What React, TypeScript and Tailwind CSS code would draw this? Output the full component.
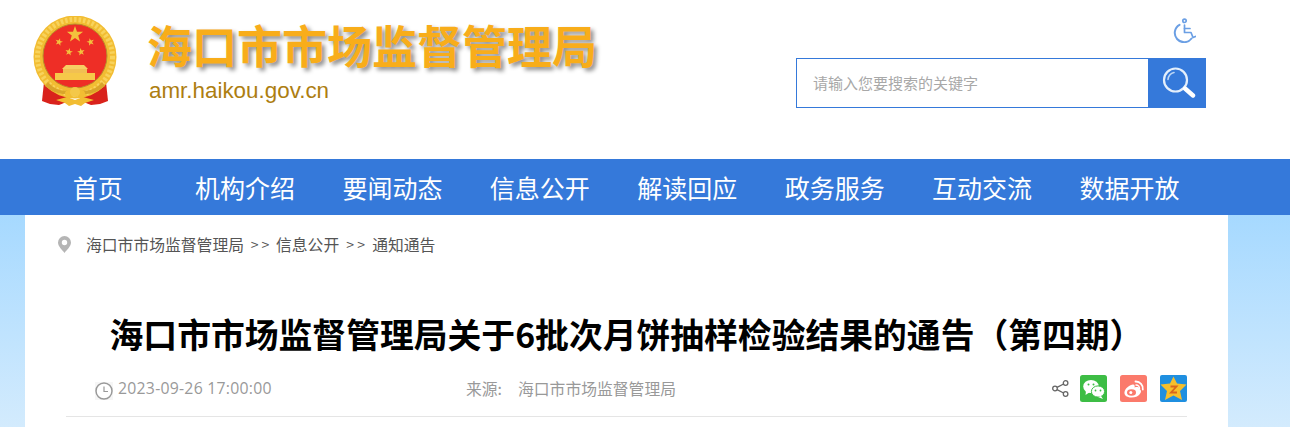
import React from "react";

const CJK = '"Noto Sans CJK SC","Liberation Sans",sans-serif';

function Star({ cx, cy, r, rot = 0 }: { cx: number; cy: number; r: number; rot?: number }) {
  const pts: string[] = [];
  for (let i = 0; i < 10; i++) {
    const a = ((-90 + rot + i * 36) * Math.PI) / 180;
    const rr = i % 2 === 0 ? r : r * 0.4;
    pts.push(`${cx + rr * Math.cos(a)},${cy + rr * Math.sin(a)}`);
  }
  return <polygon points={pts.join(" ")} fill="#f3c23e" />;
}

function Emblem() {
  return (
    <svg width="84" height="92" viewBox="0 0 84 92" className="block">
      <defs>
        <filter id="soft"><feGaussianBlur stdDeviation="0.5" /></filter>
      </defs>
      <g filter="url(#soft)">
        <path d="M11 66 L9 85 L17 88 L26 89 L36 85 L38 76 Z" fill="#d9201a" />
        <path d="M73 66 L75 85 L67 88 L58 89 L48 85 L46 76 Z" fill="#d9201a" />
        <circle cx="42" cy="41" r="41.5" fill="#f2bd33" />
        <circle cx="42" cy="41" r="37.5" fill="none" stroke="#f8d35c" strokeWidth="5" strokeDasharray="2.5 2" />
        <circle cx="42" cy="40" r="32" fill="#ee2f25" stroke="#b98f2a" strokeWidth="1" />
        <Star cx={42} cy={18.5} r={8.5} />
        <Star cx={26} cy={26} r={4} rot={15} />
        <Star cx={57.5} cy={26} r={4} rot={-15} />
        <Star cx={36} cy={36} r={4} rot={10} />
        <Star cx={48} cy={36} r={4} rot={-10} />
        <path d="M33 49 L51 49 L55 53 L29 53 Z" fill="#f7cf63" />
        <rect x="30" y="53" width="24" height="4" fill="#f1c052" />
        <rect x="22" y="57" width="40" height="7" fill="#f6c94a" />
        <path d="M26 64 H58 V67 H26 Z" fill="#ee2f25" />
        <path d="M12 70 Q26 81 36 77 L36 74 Q24 77 15 66 Z" fill="#d9a52a" />
        <path d="M72 70 Q58 81 48 77 L48 74 Q60 77 69 66 Z" fill="#d9a52a" />
        <circle cx="36" cy="78" r="4" fill="#f2bd33" />
        <circle cx="48" cy="78" r="4" fill="#f2bd33" />
        <circle cx="42" cy="76" r="5" fill="#f4c84a" />
        <path d="M23 84 L34 81 L42 84 L50 81 L61 84 L52 87 L48 90 L42 88 L36 90 L32 87 Z" fill="#f2bd33" />
      </g>
    </svg>
  );
}

function AccessIcon() {
  return (
    <svg width="24" height="25" viewBox="0 0 24 25" fill="none" stroke="#6b9fe4" strokeWidth="1.7" strokeLinecap="round" strokeLinejoin="round" className="block">
      <circle cx="12.5" cy="2.8" r="1.7" />
      <path d="M12.5 7 V14.5 H19 L21 19.5 L23.5 18.5" />
      <path d="M12.5 10.5 H18" />
      <path d="M7.5 6.8 A9.3 9.3 0 1 0 19.5 20.5" strokeWidth="2" />
    </svg>
  );
}

function SearchIcon() {
  return (
    <svg width="34" height="32" viewBox="0 0 34 32" fill="none" className="block ml-[3px]">
      <circle cx="13.5" cy="13" r="11.5" stroke="#e4effb" strokeWidth="2.2" />
      <path d="M6 12.5 A8 8 0 0 1 12 5.5" stroke="#bcd6f5" strokeWidth="1.6" strokeLinecap="round" />
      <path d="M23 21.5 L31 28.5" stroke="#ffffff" strokeWidth="4.4" strokeLinecap="round" />
    </svg>
  );
}

function Pin() {
  return (
    <svg width="13" height="17" viewBox="0 0 13 17" className="block">
      <path fillRule="evenodd" d="M6.5 0 A6.5 6.5 0 0 1 13 6.5 C13 10.5 8.5 14 6.5 17 C4.5 14 0 10.5 0 6.5 A6.5 6.5 0 0 1 6.5 0 Z M6.5 3.8 A2.7 2.7 0 1 0 6.5 9.2 A2.7 2.7 0 1 0 6.5 3.8 Z" fill="#b5b5b5" />
    </svg>
  );
}

function Clock() {
  return (
    <svg width="18" height="18" viewBox="0 0 18 18" fill="none" className="block">
      <rect width="18" height="18" fill="#f6f6f6" />
      <circle cx="9" cy="9" r="8" fill="#ffffff" stroke="#999999" strokeWidth="1.5" />
      <path d="M9 4.5 V9.5 H13" stroke="#999999" strokeWidth="1.2" />
    </svg>
  );
}

function Share() {
  return (
    <svg width="17" height="17" viewBox="0 0 17 17" fill="none" stroke="#666666" strokeWidth="1.3" className="block">
      <circle cx="13.6" cy="3" r="2.3" />
      <circle cx="3" cy="8.5" r="2.3" />
      <circle cx="13.6" cy="14" r="2.3" />
      <path d="M5 7.4 L11.6 4 M5 9.6 L11.6 13" />
    </svg>
  );
}

function Wechat() {
  return (
    <svg width="27" height="27" viewBox="0 0 27 27" className="block">
      <rect width="27" height="27" rx="2.5" fill="#3dbd45" />
      <ellipse cx="11" cy="11.5" rx="7.8" ry="6.6" fill="#ffffff" />
      <path d="M6 16 L5.5 20 L10 17 Z" fill="#ffffff" />
      <ellipse cx="18" cy="16.5" rx="6.6" ry="5.6" fill="#ffffff" stroke="#3dbd45" strokeWidth="1" />
      <path d="M21 21 L23 24 L18 22 Z" fill="#ffffff" />
      <circle cx="8.5" cy="9.5" r="1" fill="#3dbd45" />
      <circle cx="13.5" cy="9.5" r="1" fill="#3dbd45" />
      <circle cx="15.5" cy="15.5" r="0.9" fill="#3dbd45" />
      <circle cx="20.5" cy="15.5" r="0.9" fill="#3dbd45" />
    </svg>
  );
}

function Weibo() {
  return (
    <svg width="27" height="27" viewBox="0 0 27 27" className="block">
      <rect width="27" height="27" rx="2.5" fill="#fb7a6b" />
      <path d="M11.5 22.5 C6.5 22.5 4 20 4.5 17 C5 13.5 10 9.5 13 9.5 C15 9.5 15 11.5 14.5 12.5 C17 11.7 19.5 12 19.5 14 C21 15 21.5 16 20.5 18 C19 21 15.5 22.5 11.5 22.5 Z" fill="#ffffff" />
      <ellipse cx="11.5" cy="17.5" rx="4.5" ry="3.2" fill="#fb7a6b" />
      <circle cx="10.8" cy="17.5" r="1.5" fill="#ffffff" />
      <path d="M15.5 6.5 A7 7 0 0 1 22.8 14.5" stroke="#ffffff" strokeWidth="1.8" fill="none" strokeLinecap="round" />
      <path d="M16 10 A3.5 3.5 0 0 1 19.5 13.5" stroke="#ffffff" strokeWidth="1.5" fill="none" strokeLinecap="round" />
    </svg>
  );
}

function Qzone() {
  return (
    <svg width="27" height="27" viewBox="0 0 27 27" className="block">
      <rect width="27" height="27" rx="2" fill="#1f8fe0" />
      <polygon points="13.5,1.5 17,8.5 26.5,9.5 20,16 22,25 13.5,20.5 5,25 7,16 0.5,9.5 10,8.5" fill="#f6bf2c" />
      <path d="M10.5 11.5 H16.5 L11 17.5 H17" fill="none" stroke="#d9661c" strokeWidth="1.8" />
    </svg>
  );
}

const NAV = ["首页", "机构介绍", "要闻动态", "信息公开", "解读回应", "政务服务", "互动交流", "数据开放"];

export default function App() {
  return (
    <div className="w-[1290px] h-[427px] overflow-hidden bg-[#ffffff]" style={{ fontFamily: CJK }}>
      <header className="h-[159px] flex pl-[33px] pr-[84px]">
        <div className="pt-[16px]">
          <Emblem />
        </div>
        <div className="ml-[30px] pt-[15px]">
          <div className="text-[45px] leading-[60px] font-bold text-[#f8ad1a] [text-shadow:3px_3px_4px_#8f8f8f]">
            海口市市场监督管理局
          </div>
          <div className="mt-[1px] ml-[2px] text-[22.4px] leading-[30px] text-[#ad7e11]" style={{ fontFamily: '"Liberation Sans",sans-serif' }}>
            amr.haikou.gov.cn
          </div>
        </div>
        <div className="ml-auto flex flex-col items-end pt-[18px]">
          <div className="mr-[10px] h-[40px]">
            <AccessIcon />
          </div>
          <div className="flex h-[50px] w-[410px]">
            <div className="flex-1 border border-[#3579da] flex items-center pl-[16px] text-[15px] text-[#a8a8a8]">
              请输入您要搜索的关键字
            </div>
            <div className="w-[57px] bg-[#3579da] flex items-center justify-center">
              <SearchIcon />
            </div>
          </div>
        </div>
      </header>

      <nav className="h-[56px] bg-[#3579da] flex pl-[24px]">
        {NAV.map((n) => (
          <div key={n} className="w-[147.4px] text-center text-[25px] leading-[56px] text-white">
            {n}
          </div>
        ))}
      </nav>

      <main className="h-[212px] pl-[25px] pr-[62px] bg-gradient-to-b from-[#a6d9ff] to-[#d3ebfd]">
        <div className="h-[212px] bg-white pl-[33px] pr-[41px]">
          <div className="flex items-center h-[60px] pb-[1px] text-[15.8px] text-[#555555]">
            <Pin />
            <span className="ml-[15px]">海口市市场监督管理局</span>
            <span className="w-[32px] text-center text-[14px]">&gt; &gt;</span>
            <span>信息公开</span>
            <span className="w-[33px] text-center text-[14px]">&gt; &gt;</span>
            <span>通知通告</span>
          </div>
          <h1 className="-ml-[33px] -mr-[41px] mt-[34px] text-center text-[33.8px] leading-[50px] font-bold text-black">
            海口市市场监督管理局关于6批次月饼抽样检验结果的通告（第四期）
          </h1>
          <div className="mt-[15px] ml-[8px] h-[43px] border-b border-[#e5e5e5] flex items-start text-[15.8px] text-[#999999]">
            <div className="flex items-center h-[30px]">
              <div className="ml-[29px] mt-[3px]"><Clock /></div>
              <span className="ml-[5px] w-[348px] tracking-[0.25px]" style={{ fontFamily: '"Open Sans","Noto Sans CJK SC",sans-serif' }}>2023-09-26 17:00:00</span>
            </div>
            <div className="flex h-[30px] items-center">
              <span>来源:</span>
              <span className="ml-[16px]">海口市市场监督管理局</span>
            </div>
            <div className="ml-auto flex items-start gap-[13px] mt-[1px]">
              <div className="mt-[5px] -mr-[2px]"><Share /></div>
              <Wechat />
              <Weibo />
              <Qzone />
            </div>
          </div>
        </div>
      </main>
    </div>
  );
}
